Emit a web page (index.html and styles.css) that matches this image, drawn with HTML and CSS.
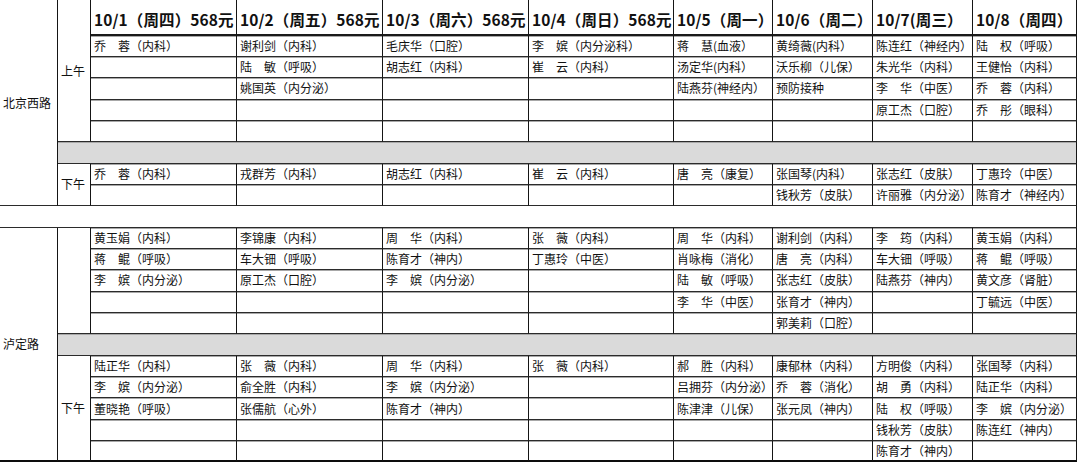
FILE: index.html
```html
<!DOCTYPE html>
<html lang="zh">
<head>
<meta charset="utf-8">
<title>门诊排班表</title>
<link rel="stylesheet" href="styles.css">
</head>
<body>
<div class="sched">
<div class="cell site span9">北京西路</div>
<div class="cell period span6">上午</div>
<div class="cell head">10/1（周四）568元</div><div class="cell head">10/2（周五）568元</div><div class="cell head">10/3（周六）568元</div><div class="cell head">10/4（周日）568元</div><div class="cell head">10/5（周一）</div><div class="cell head">10/6（周二）</div><div class="cell head">10/7(周三）</div><div class="cell head">10/8（周四）</div>

<div class="cell">乔　蓉（内科）</div><div class="cell">谢利剑（内科）</div><div class="cell">毛庆华（口腔）</div><div class="cell">李　嫔（内分泌科）</div><div class="cell">蒋　慧(血液）</div><div class="cell">黄绮薇(内科）</div><div class="cell">陈连红（神经内）</div><div class="cell">陆　权（呼吸）</div>
<div class="cell"></div><div class="cell">陆　敏（呼吸）</div><div class="cell">胡志红（内科）</div><div class="cell">崔　云（内科）</div><div class="cell">汤定华(内科）</div><div class="cell">沃乐柳（儿保）</div><div class="cell">朱光华（内科）</div><div class="cell">王健怡（内科）</div>
<div class="cell"></div><div class="cell">姚国英（内分泌）</div><div class="cell"></div><div class="cell"></div><div class="cell">陆燕芬(神经内）</div><div class="cell">预防接种</div><div class="cell">李　华（中医）</div><div class="cell">乔　蓉（内科）</div>
<div class="cell"></div><div class="cell"></div><div class="cell"></div><div class="cell"></div><div class="cell"></div><div class="cell"></div><div class="cell">原工杰（口腔）</div><div class="cell">乔　彤（眼科）</div>
<div class="cell"></div><div class="cell"></div><div class="cell"></div><div class="cell"></div><div class="cell"></div><div class="cell"></div><div class="cell"></div><div class="cell"></div>
<div class="cell gap"></div>
<div class="cell period span2">下午</div>
<div class="cell">乔　蓉（内科）</div><div class="cell">戎群芳（内科）</div><div class="cell">胡志红（内科）</div><div class="cell">崔　云（内科）</div><div class="cell">唐　亮（康复）</div><div class="cell">张国琴(内科）</div><div class="cell">张志红（皮肤）</div><div class="cell">丁惠玲（中医）</div>
<div class="cell"></div><div class="cell"></div><div class="cell"></div><div class="cell"></div><div class="cell"></div><div class="cell">钱秋芳（皮肤）</div><div class="cell">许丽雅（内分泌）</div><div class="cell">陈育才（神经内）</div>

<div class="cell sep"></div>

<div class="cell site span11 end">泸定路</div>
<div class="cell period span5"></div>
<div class="cell">黄玉娟（内科）</div><div class="cell">李锦康（内科）</div><div class="cell">周　华（内科）</div><div class="cell">张　薇（内科）</div><div class="cell">周　华（内科）</div><div class="cell">谢利剑（内科）</div><div class="cell">李　筠（内科）</div><div class="cell">黄玉娟（内科）</div>
<div class="cell">蒋　鲲（呼吸）</div><div class="cell">车大钿（呼吸）</div><div class="cell">陈育才（神内）</div><div class="cell">丁惠玲（中医）</div><div class="cell">肖咏梅（消化）</div><div class="cell">唐　亮（内科）</div><div class="cell">车大钿（呼吸）</div><div class="cell">蒋　鲲（呼吸）</div>
<div class="cell">李　嫔（内分泌）</div><div class="cell">原工杰（口腔）</div><div class="cell">李　嫔（内分泌）</div><div class="cell"></div><div class="cell">陆　敏（呼吸）</div><div class="cell">张志红（皮肤）</div><div class="cell">陆燕芬（神内）</div><div class="cell">黄文彦（肾脏）</div>
<div class="cell"></div><div class="cell"></div><div class="cell"></div><div class="cell"></div><div class="cell">李　华（中医）</div><div class="cell">张育才（神内）</div><div class="cell"></div><div class="cell">丁毓远（中医）</div>
<div class="cell"></div><div class="cell"></div><div class="cell"></div><div class="cell"></div><div class="cell"></div><div class="cell">郭美莉（口腔）</div><div class="cell"></div><div class="cell"></div>
<div class="cell gap"></div>
<div class="cell period span5 end">下午</div>
<div class="cell">陆正华（内科）</div><div class="cell">张　薇（内科）</div><div class="cell">周　华（内科）</div><div class="cell">张　薇（内科）</div><div class="cell">郝　胜（内科）</div><div class="cell">康郁林（内科）</div><div class="cell">方明俊（内科）</div><div class="cell">张国琴（内科）</div>
<div class="cell">李　嫔（内分泌）</div><div class="cell">俞全胜（内科）</div><div class="cell">李　嫔（内分泌）</div><div class="cell"></div><div class="cell">吕拥芬（内分泌）</div><div class="cell">乔　蓉（消化）</div><div class="cell">胡　勇（内科）</div><div class="cell">陆正华（内科）</div>
<div class="cell">董晓艳（呼吸）</div><div class="cell">张儒航（心外）</div><div class="cell">陈育才（神内）</div><div class="cell"></div><div class="cell">陈津津（儿保）</div><div class="cell">张元凤（神内）</div><div class="cell">陆　权（呼吸）</div><div class="cell">李　嫔（内分泌）</div>
<div class="cell"></div><div class="cell"></div><div class="cell"></div><div class="cell"></div><div class="cell"></div><div class="cell"></div><div class="cell">钱秋芳（皮肤）</div><div class="cell">陈连红（神内）</div>
<div class="cell end"></div><div class="cell end"></div><div class="cell end"></div><div class="cell end"></div><div class="cell end"></div><div class="cell end"></div><div class="cell end">陈育才（神内）</div><div class="cell end"></div>
</div>
</body>
</html>
```
FILE: styles.css
```css
html, body {
  margin: 0;
  padding: 0;
  background: #ffffff;
}

body {
  font-family: "Noto Sans CJK SC", "Noto Sans", sans-serif;
  color: #111111;
}

.sched {
  display: grid;
  width: 1077px;
  grid-template-columns: 58px 33px 146px 146px 146px 145px 99px 100px 100px 104px;
  grid-template-rows: 35.5px repeat(20, 21.35px);
}

.cell {
  box-sizing: border-box;
  display: flex;
  align-items: center;
  padding-left: 3px;
  border-right: 1px solid #151515;
  border-bottom: 1px solid #2b2b2b;
  box-shadow: inset 0 1px 0 #a8a8a8;
  font-size: 12px;
  line-height: 12px;
  white-space: nowrap;
  overflow: visible;
  min-width: 0;
}

.head {
  font-size: 15.5px;
  line-height: 16px;
  font-weight: bold;
  padding-top: 5px;
  padding-left: 3px;
  border-bottom: 2px solid #1a1a1a;
  box-shadow: none;
  letter-spacing: 0.1px;
}

.site {
  padding-left: 3px;
  box-shadow: none;
  padding-top: 0;
}

.period {
  box-shadow: none;
}

.span9 { grid-row: span 9; }
.span6 { grid-row: span 6; padding-top: 0; }
.span2 { grid-row: span 2; }
.span5 { grid-row: span 5; }
.span11 { grid-row: span 11; }

.gap {
  grid-column: span 9;
  background: #dadada;
}

.sep {
  grid-column: span 10;
  box-shadow: none;
}

.end {
  border-bottom: 2px solid #0d0d0d;
}
```
